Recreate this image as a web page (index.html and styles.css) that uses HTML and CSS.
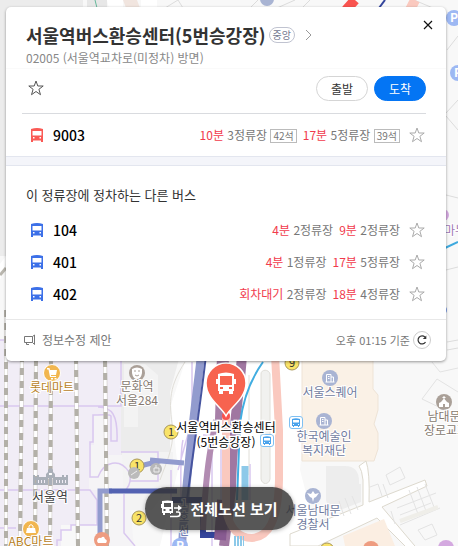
FILE: index.html
```html
<!DOCTYPE html>
<html lang="ko">
<head>
  <meta charset="utf-8">
  <title>서울역버스환승센터(5번승강장)</title>
  <link rel="stylesheet" href="styles.css">
</head>
<body>
  <!-- Icon shapes shared by the panel and the map -->
  <svg class="symbols" aria-hidden="true">
    <symbol id="iconBus" viewBox="0 0 12 14">
      <path fill="currentColor" fill-rule="evenodd" d="M0 1Q6-.8 12 1V14H10V12.500H2V14H0ZM1.500 3V7.500H10.500V3ZM2 9V10.500H3.500V9ZM8.500 9V10.500H10V9Z"/>
    </symbol>
    <symbol id="iconBusPin" viewBox="0 0 20 22">
      <path fill="currentColor" fill-rule="evenodd" d="M2 2Q10-1 18 2V7H20V12H18V19H17V22H13V19H7V22H3V19H2V12H0V7H2ZM4 4V13H16V4ZM4 15V17H7V15ZM13 15V17H16V15Z"/>
    </symbol>
    <symbol id="iconStar" viewBox="0 0 16 16">
      <path fill="none" stroke="currentColor" d="M8 1L9.800 6H15.200L10.900 9.300L12.500 14.700L8 11.500L3.500 14.700L5.100 9.300L.8 6H6.200Z"/>
    </symbol>
    <symbol id="iconBuilding" viewBox="0 0 16 16">
      <circle cx="8" cy="8" r="8" fill="#a9b4d3"/>
      <path fill="none" stroke="#fff" d="M4.500 12V4.500H9V12M9 7H11.500V12M3.500 12H12.500M6 6.500H7.500M6 8.500H7.500"/>
    </symbol>
    <symbol id="iconStop" viewBox="0 0 14 13">
      <rect x=".5" y=".5" width="13" height="12" rx="2.500" fill="#fff" stroke="#7fc0f2"/>
      <path fill="#4aa3ec" fill-rule="evenodd" d="M3 3Q7 1.500 11 3V10H10V11H9V10H5V11H4V10H3ZM4 4V6.500H10V4ZM4 8V9H5V8ZM9 8V9H10V8Z"/>
    </symbol>
  </svg>

  <svg class="map" viewBox="0 0 458 546" preserveAspectRatio="xMinYMin slice" aria-hidden="true">
    <rect width="458" height="546" fill="#f8f8f8"/>

    <!-- Blocks and station area -->
    <path fill="#ececec" d="M0 0H83V256H0Z M121 355H180L170 392V455H121Z"/>
    <path fill="#f3f3f3" d="M124 364H145L158 375V404H138V427H124Z"/>
    <path fill="#e7e7e7" d="M87 0H107V8H87Z"/>
    <path fill="#f1e5df" d="M123 0H137L140 8H126Z"/>
    <path fill="#fff" d="M107 0H123V8H109Z M141 0H157V8H141Z"/>
    <path stroke="#65b99b" d="M95 0L97 8"/>
    <path fill="#f1edf6" d="M0 340H121V490L94 525H61V546H0Z"/>
    <path fill="#f5f4f6" d="M94 415H108V455H125L134 546H98V490H89V445H94Z"/>
    <path fill="#f3f3f3" d="M122 452H173V482L152 510H124Z"/>
    <path fill="#fff" d="M185 362H306V395L300 470L320 546H160L178 470L171 405Z"/>
    <g fill="none" stroke="#d9c7ef" stroke-width="1.500">
      <path d="M0 340H6M0 406H121V355M98 407C112 407 118 415 117 441H111V416C109 414 107 415 93 415V442H90V477H98C104 461 120 458 129 472C132 480 130 486 124 492M0 490H90L97 500V525H71V530H61V540H57V546M121 452H158V481H130M124 494V533L135 546M0 528H16"/>
      <path d="M192 362V420L178 470M203 435H212V546M221 440V546M171 470V546M183 440C178 460 183 520 181 546M250 464V500"/>
    </g>
    <g fill="none" stroke="#e0ded8">
      <path d="M185 362C170 385 168 400 173 430C173 450 166 463 160 480M249 375V475M244 365V372"/>
      <path fill="#f1f1ef" d="M261 374C261 369 269 369 270 374V479C269 485 262 485 261 479Z"/>
    </g>

    <!-- Roads and buildings on the east side -->
    <path fill="#faf1e6" stroke="#eee3d6" d="M302 355H373V389L378 395V410L374 424L378 433V449L374 461H302Z"/>
    <path fill="#ededed" d="M326 466H345Q360 466 359 484H361V502L330 514L326 500Z"/>
    <path fill="#fff" stroke="#ddd9ce" d="M359 466L366 461Q370 472 369 502L425 480L427 486L382 507L420 552H411L377 518L318 546H290V534L363 505V480Q362 470 359 466Z"/>
    <path fill="#fbeee2" d="M343 536L384 519L395 546H345Z"/>
    <path fill="none" stroke="#e3e3e3" d="M422 399L437 379L458 392M422 399L445 410M432 362L440 372L458 368M386 475L400 467L405 478L390 485ZM370 487L378 484L382 496M383 484L388 498M339 501L344 516M345 498L351 514M352 496L358 510M409 490L418 514M417 487L426 511M425 484L434 507M397 508L436 493M400 515L431 503M418 530L432 524L437 535L425 540ZM391 511L395 524M400 525L440 508"/>
    <path fill="none" stroke="#efeee9" stroke-width="4" d="M400 521L438 507"/>
    <g fill="none" stroke="#dcdcdc">
      <path d="M447 50L458 36M446 113L458 100M446 116L458 130M446 195L458 198M446 270L458 267M447 342L458 340M447 350L458 348M165 8L178 0L183 8M250 8L258 0M277 8L295 0M302 8L310 0M414 0L433 8"/>
      <path stroke="#3ea9de" stroke-width="2" d="M445 248L458 242"/>
    </g>
    <path fill="#fff" d="M0 264L6 256V262L0 280Z"/>
    <path fill="none" stroke="#b9b6ae" stroke-width="3" d="M0 275L6 268"/>

    <!-- Railway tracks -->
    <g fill="none" stroke="#c8c5be" stroke-width="4">
      <path d="M6 310V546M22 355L20 546M36 355L35 546M51 355L50 546M76 355L78 546M105 355L107 546"/>
      <path stroke="#b3b0a8" stroke-width="4" stroke-dasharray="7 6" d="M6 310V546M22 355L20 546M36 359L35 546M51 362L50 546M76 357L78 546M105 360L107 546"/>
      <path stroke="#fff" stroke-width="3" stroke-dasharray="6 7" stroke-dashoffset="6" d="M6 310V546M22 355L20 546M36 359L35 546M51 362L50 546M76 357L78 546M105 360L107 546"/>
    </g>

    <!-- Subway and bus lines -->
    <g fill="none">
      <path stroke="#929bce" stroke-width="5" d="M100 535V491H112M140 466L160 461M150 460L184 463"/>
      <path stroke="#5362b2" stroke-width="5" d="M109 491H177"/>
      <path stroke="#929bce" stroke-width="8" d="M201 355C196 400 187 460 182 546"/>
      <path stroke="#46549f" stroke-width="2" d="M206 355C201 400 192 460 187 500"/>
      <path stroke="#34459c" stroke-width="6" d="M172 500H203V535H216"/>
      <path stroke="#a077a1" stroke-width="10" d="M242 355C239 400 232 430 231 490L224 546"/>
      <path stroke="#a77fa7" stroke-width="12" d="M223 355L221 420"/>
      <path stroke="#b28cb2" stroke-width="6" d="M216 420C210 450 206 470 203 530"/>
      <path stroke="#885b91" stroke-width="12" d="M223 500L220 540"/>
      <path stroke="#fac9bf" stroke-width="8" d="M226 417V510C230 530 240 538 252 538C268 537 278 522 279 480V430L275 355"/>
      <path stroke="#41ade1" stroke-width="2" d="M263 362C250 380 243 400 240 423L237 500"/>
      <path stroke="#8dc9e9" stroke-width="7" d="M245 466V500"/>
      <path stroke="#f9534f" stroke-width="10" d="M355 0L346 10"/>
      <path stroke="#34459c" stroke-width="2" d="M385 0L379 8"/>
      <path stroke="#fac9bf" stroke-width="10" d="M415 0L410 10"/>
      <path stroke="#8dc9e9" stroke-width="10" stroke-dasharray="2 1" d="M234 541H244"/>
    </g>

    <!-- Exit numbers -->
    <g class="exit">
      <circle cx="137" cy="466" r="7"/><text x="137" y="470">1</text>
      <circle cx="139" cy="518" r="7"/><text x="139" y="522">2</text>
      <circle cx="171" cy="432" r="7"/><text x="171" y="436">1</text>
      <circle cx="292" cy="363" r="7"/><text x="292" y="367">9</text>
      <circle cx="327" cy="550" r="7"/>
    </g>

    <!-- Place icons -->
    <g fill="#f1b64f" stroke="#fff">
      <circle cx="52" cy="373" r="8.500"/>
      <circle cx="31" cy="529" r="8.500"/>
      <path fill="#fff" stroke="none" d="M47 368H49.500L50 370H57L56 375H51V376H56V377H50L48.500 369.500H47ZM51 378H53V379.500H51ZM54.500 378H56.500V379.500H54.500ZM27 528H35L36 533H26Z"/>
      <path fill="none" d="M29 529V526Q31 523 33 526V529"/>
    </g>
    <circle cx="137" cy="373" r="8" fill="#aaa098"/>
    <path fill="#fff" d="M132 369Q137 366 142 369V373Q141 379 137 379Q133 379 132 373Z"/>
    <path fill="none" stroke="#aaa098" d="M134 371H136M138 371H140M135 375Q137 377 139 375"/>
    <use href="#iconBuilding" x="322" y="370" width="16" height="16"/>
    <use href="#iconBuilding" x="316" y="413" width="16" height="16"/>
    <circle cx="313" cy="496" r="8" fill="#a9b4d3"/>
    <path fill="#fff" d="M307 493L311 494L313 491L315 494L319 493L316 497L314 498L313 502L312 498L310 497Z"/>
    <circle cx="444" cy="402" r="8" fill="#aaa098"/>
    <path fill="#fff" fill-rule="evenodd" d="M443.500 396H444.500V397H445.500V398H444.500V399L447 402L449 403V407H445V404H443V407H439V403L441 402L443.500 399V398H442.500V397H443.500Z"/>
    <circle cx="102" cy="540" r="8" fill="#ee9c80"/>
    <path fill="#fff" d="M97 541Q98 537 101 538Q104 535 105 539Q108 540 106 543H98Z"/>
    <circle cx="371" cy="549" r="8" fill="#ee9c80"/>
    <circle cx="446" cy="548" r="8" fill="#d4a9e0"/>
    <circle cx="443" cy="215" r="6" fill="#d4a9e0"/>
    <circle cx="442" cy="310" r="5" fill="#7c9ce4"/>
    <circle cx="134" cy="473" r="6" fill="#bbb"/>
    <circle cx="156" cy="469" r="6" fill="#b8b8b8"/>
    <path fill="none" stroke="#eee" d="M131 475L137 471M154 468H159V472H154ZM156 465V468"/>
    <circle cx="267" cy="-1" r="7" fill="#a9b4d3"/>
    <circle cx="454" cy="18" r="8" fill="#9db8f3"/>
    <circle cx="458" cy="73" r="8" fill="#9db8f3"/>
    <circle cx="180" cy="546" r="8" fill="#9db8f3"/>
    <g class="parking">
      <text x="454" y="22">P</text>
      <text x="458" y="77">P</text>
      <text x="180" y="550">P</text>
    </g>
    <use href="#iconStop" x="289" y="416" width="14" height="13"/>
    <use href="#iconStop" x="260" y="434" width="14" height="13"/>

    <!-- Seoul station building -->
    <path fill="#a9afb8" fill-rule="evenodd" d="M33 485V475H35V477H37V475H39V477H46V474L48 472V470Q50.500 466 53 470V472L55 474V477H62V475H64V477H66V475H68V485ZM35 480V483H36V480ZM38 480V483H39V480ZM41 480V483H42V480ZM44 480V483H45V480ZM48 478V485H49V478ZM52 478V485H53V478ZM56 480V483H57V480ZM59 480V483H60V480ZM62 480V483H63V480ZM65 480V483H66V480ZM49 473H52V475H49Z"/>

    <g class="place">
      <text class="shop" x="52" y="392">롯데마트</text>
      <text class="shop" x="31" y="546">ABC마트</text>
      <text class="culture" x="137" y="391">문화역</text>
      <text class="culture" x="137" y="405">서울284</text>
      <text class="culture" x="444" y="421">남대문</text>
      <text class="culture" x="446" y="435">장로교회</text>
      <text class="office" x="330" y="397">서울스퀘어</text>
      <text class="office" x="324" y="441">한국예술인</text>
      <text class="office" x="324" y="455">복지재단</text>
      <text class="office" x="313" y="515">서울남대문</text>
      <text class="office" x="313" y="529">경찰서</text>
      <text class="beauty" x="455" y="235">마누</text>
      <text class="station" x="50" y="501">서울역</text>
      <text class="line" x="184" y="507">1</text>
      <text class="line" x="184" y="521">호</text>
      <text class="line" x="184" y="535">선</text>
    </g>

    <!-- Selected stop -->
    <circle cx="226" cy="416" r="4" fill="#f9534f"/>
    <path fill="#f7634f" stroke="#fff" stroke-width="1.500" d="M226 416C222 407 206 399 206 383A20 20 0 0 1 246 383C246 399 230 407 226 416Z"/>
    <use href="#iconBusPin" x="216" y="372" width="20" height="22" color="#fff"/>
    <text class="stop-label" x="226" y="432">서울역버스환승센터</text>
    <text class="stop-label" x="226" y="447">(5번승강장)</text>
  </svg>

  <main class="overlay">
    <section class="panel">
      <header class="panel-header">
        <div class="title-row">
          <h1>서울역버스환승센터(5번승강장)</h1>
          <span class="badge">중앙</span>
          <a class="more" href="#" aria-label="상세보기">
            <svg width="8" height="12" viewBox="0 0 8 12"><path fill="none" stroke="#999" d="M1 1L6 6L1 11"/></svg>
          </a>
          <button class="close" type="button" aria-label="닫기">
            <svg width="10" height="10" viewBox="0 0 10 10"><path stroke="#111" stroke-width="1.200" d="M1 1L9 9M9 1L1 9"/></svg>
          </button>
        </div>
        <p>02005 (서울역교차로(미정차) 방면)</p>
      </header>

      <div class="actions">
        <button class="star star-main" type="button" aria-label="즐겨찾기"><svg><use href="#iconStar"/></svg></button>
        <button class="route-button" type="button">출발</button>
        <button class="route-button primary" type="button">도착</button>
      </div>

      <div class="bus-row first-row">
        <svg class="bus-icon red"><use href="#iconBus"/></svg>
        <a class="bus-number" href="#">9003</a>
        <span class="arrival"><em>10분</em> 3정류장 <span class="seat">42석</span></span>
        <span class="arrival"><em>17분</em> 5정류장 <span class="seat">39석</span></span>
        <button class="star" type="button" aria-label="즐겨찾기"><svg><use href="#iconStar"/></svg></button>
      </div>

      <div class="divider"></div>

      <h2>이 정류장에 정차하는 다른 버스</h2>
      <div class="bus-list">
        <div class="bus-row">
          <svg class="bus-icon"><use href="#iconBus"/></svg>
          <a class="bus-number" href="#">104</a>
          <span class="arrival"><em>4분</em> 2정류장</span>
          <span class="arrival"><em>9분</em> 2정류장</span>
          <button class="star" type="button" aria-label="즐겨찾기"><svg><use href="#iconStar"/></svg></button>
        </div>
        <div class="bus-row">
          <svg class="bus-icon"><use href="#iconBus"/></svg>
          <a class="bus-number" href="#">401</a>
          <span class="arrival"><em>4분</em> 1정류장</span>
          <span class="arrival"><em>17분</em> 5정류장</span>
          <button class="star" type="button" aria-label="즐겨찾기"><svg><use href="#iconStar"/></svg></button>
        </div>
        <div class="bus-row">
          <svg class="bus-icon"><use href="#iconBus"/></svg>
          <a class="bus-number" href="#">402</a>
          <span class="arrival"><em>회차대기</em> 2정류장</span>
          <span class="arrival"><em>18분</em> 4정류장</span>
          <button class="star" type="button" aria-label="즐겨찾기"><svg><use href="#iconStar"/></svg></button>
        </div>
        <div class="bus-row next-row">
          <button class="star" type="button" aria-label="즐겨찾기"><svg><use href="#iconStar"/></svg></button>
        </div>
      </div>

      <footer class="panel-footer">
        <a class="suggest" href="#">
          <svg width="12" height="12" viewBox="0 0 12 12"><path fill="none" stroke="#777" d="M8.500 2.500H.5V8.500H8.500M8.500 2.500L10.500 1V10.500L8.500 8.500ZM2.500 8.500V10.500H5"/></svg>
          정보수정 제안
        </a>
        <span class="time">오후 01:15 기준</span>
        <button class="refresh" type="button" aria-label="새로고침">
          <svg width="10" height="10" viewBox="0 0 10 10"><path fill="none" stroke="#333" stroke-width="1.200" d="M8.500 7A4 4 0 1 1 8 2.200"/><path fill="#333" d="M9.300 .5V4H5.800Z"/></svg>
        </button>
      </footer>
    </section>

    <button class="all-routes" type="button">
      <svg width="21" height="18" viewBox="0 0 21 18">
        <path fill="#fff" fill-rule="evenodd" d="M1 1Q6.500 0 12 1V9H12V13H10V14H9V13H4V15H2V13H1V8H0V4H1ZM3 3V7H10V3ZM2.500 9V11H4.500V9ZM8.500 9V11H10.500V9Z"/>
        <path fill="none" stroke="#fff" stroke-width="1.500" d="M13 8H18M15 12H17Q19 12 19 14Q19 16.500 16 16.500H9"/>
        <path fill="#fff" d="M17 5L21 8L17 11Z"/>
      </svg>
      전체노선 보기
    </button>
  </main>
</body>
</html>
```

FILE: styles.css
```css
* {
  box-sizing: border-box;
}

body {
  margin: 0;
  min-height: 100vh;
  overflow: hidden;
  font-family: "Noto Sans CJK KR", "Noto Sans", sans-serif;
  font-size: 12px;
  line-height: 18px;
  color: #333;
}

h1, h2, p {
  margin: 0;
}

a {
  color: inherit;
  text-decoration: none;
}

button {
  padding: 0;
  border: 0;
  background: none;
  font-family: inherit;
  color: inherit;
  cursor: pointer;
}

svg {
  display: block;
}

.symbols {
  position: absolute;
  width: 0;
  height: 0;
}

/* Map */
.map {
  position: absolute;
  top: 0;
  left: 0;
  width: 100%;
  height: 100%;
}

.map text {
  text-anchor: middle;
}

.exit circle {
  fill: #f9e368;
  stroke: #a9975a;
}

.exit text {
  font-size: 11px;
  fill: #333;
}

.parking text {
  font-size: 12px;
  font-weight: bold;
  fill: #fff;
}

.place text {
  font-size: 12px;
  stroke: #fff;
  stroke-width: 2px;
  paint-order: stroke;
}

.place .shop { fill: #b8821f; }
.place .culture { fill: #857970; }
.place .office { fill: #717ca0; }
.place .beauty { fill: #a077b4; }
.place .station { fill: #444; font-size: 13px; }
.place .line { fill: #5563ac; font-size: 11px; }

.stop-label {
  font-size: 12px;
  fill: #000;
  stroke: #fff;
  stroke-width: 3px;
  paint-order: stroke;
}

/* Everything that floats over the map */
.overlay {
  position: relative;
  display: flex;
  flex-direction: column;
  justify-content: space-between;
  min-height: 100vh;
  padding: 7px 12px 16px 6px;
}

.panel {
  border-radius: 5px;
  background: #fff;
  box-shadow: 0 1px 3px rgba(0, 0, 0, 0.4);
  overflow: hidden;
}

.panel-header {
  padding: 13px 13px 1px 20px;
  border-bottom: 1px solid #fafafa;
}

.title-row {
  display: flex;
  align-items: center;
  height: 29px;
}

h1 {
  font-size: 18px;
  line-height: 28px;
}

.badge {
  margin-left: 3px;
  padding: 0 3px;
  border: 1px solid #c0c3d0;
  border-radius: 8px;
  font-size: 10px;
  line-height: 14px;
  color: #73778f;
}

.more {
  margin-left: 10px;
}

.close {
  align-self: flex-start;
  margin-left: auto;
}

.panel-header p {
  color: #888;
}

.actions {
  display: flex;
  align-items: center;
  gap: 6px;
  height: 45px;
  margin: 0 20px 0 16px;
  padding: 0 0 6px 6px;
  border-bottom: 1px solid #d9dbdf;
}

.star {
  color: #aaa;
}

.star svg {
  width: 16px;
  height: 16px;
}

.star-main {
  margin-right: auto;
  color: #555;
}

.route-button {
  width: 52px;
  height: 25px;
  border: 1px solid #d5d5d5;
  border-radius: 13px;
  font-size: 12px;
}

.route-button.primary {
  border-color: #0475f4;
  background: #0475f4;
  color: #fff;
}

/* Bus rows */
.bus-row {
  display: flex;
  align-items: center;
  height: 32px;
  padding: 0 21px 0 25px;
}

.first-row {
  height: 42px;
}

.bus-icon {
  width: 12px;
  height: 14px;
  color: #3c70e8;
}

.bus-icon.red {
  color: #fa5a55;
}

.bus-number {
  margin: 0 auto 0 10px;
  font-size: 14px;
  font-weight: 500;
  color: #000;
}

.arrival {
  margin-left: 6px;
  color: #777;
}

.arrival em {
  font-style: normal;
  color: #f13b4c;
}

.seat {
  display: inline-block;
  padding: 0 2px;
  border: 1px solid #bbb;
  font-size: 10px;
  line-height: 12px;
}

.bus-row .star {
  margin-left: 9px;
}

.divider {
  height: 10px;
  border: solid #e3e6ef;
  border-width: 1px 0;
  background: #f4f5fa;
}

h2 {
  padding: 19px 20px 10px;
  font-size: 13px;
  font-weight: normal;
  line-height: 19px;
}

.bus-list {
  max-height: 105px;
  overflow: hidden;
}

.next-row {
  justify-content: flex-end;
}

.panel-footer {
  display: flex;
  align-items: center;
  height: 42px;
  padding: 0 15px 2px 18px;
  border-top: 1px solid #e8e8e8;
  color: #777;
}

.suggest {
  display: flex;
  align-items: center;
  gap: 6px;
  margin-right: auto;
}

.time {
  font-size: 11px;
}

.refresh {
  display: flex;
  align-items: center;
  justify-content: center;
  width: 18px;
  height: 18px;
  margin-left: 3px;
  border: 1px solid #ccc;
  border-radius: 50%;
}

.all-routes {
  display: flex;
  align-items: center;
  align-self: center;
  gap: 8px;
  height: 43px;
  margin-right: 13px;
  padding: 0 16px;
  border-radius: 22px;
  background: rgba(50, 50, 50, 0.82);
  box-shadow: 0 1px 4px rgba(0, 0, 0, 0.3);
  font-size: 15px;
  font-weight: bold;
  color: #fff;
}
```
